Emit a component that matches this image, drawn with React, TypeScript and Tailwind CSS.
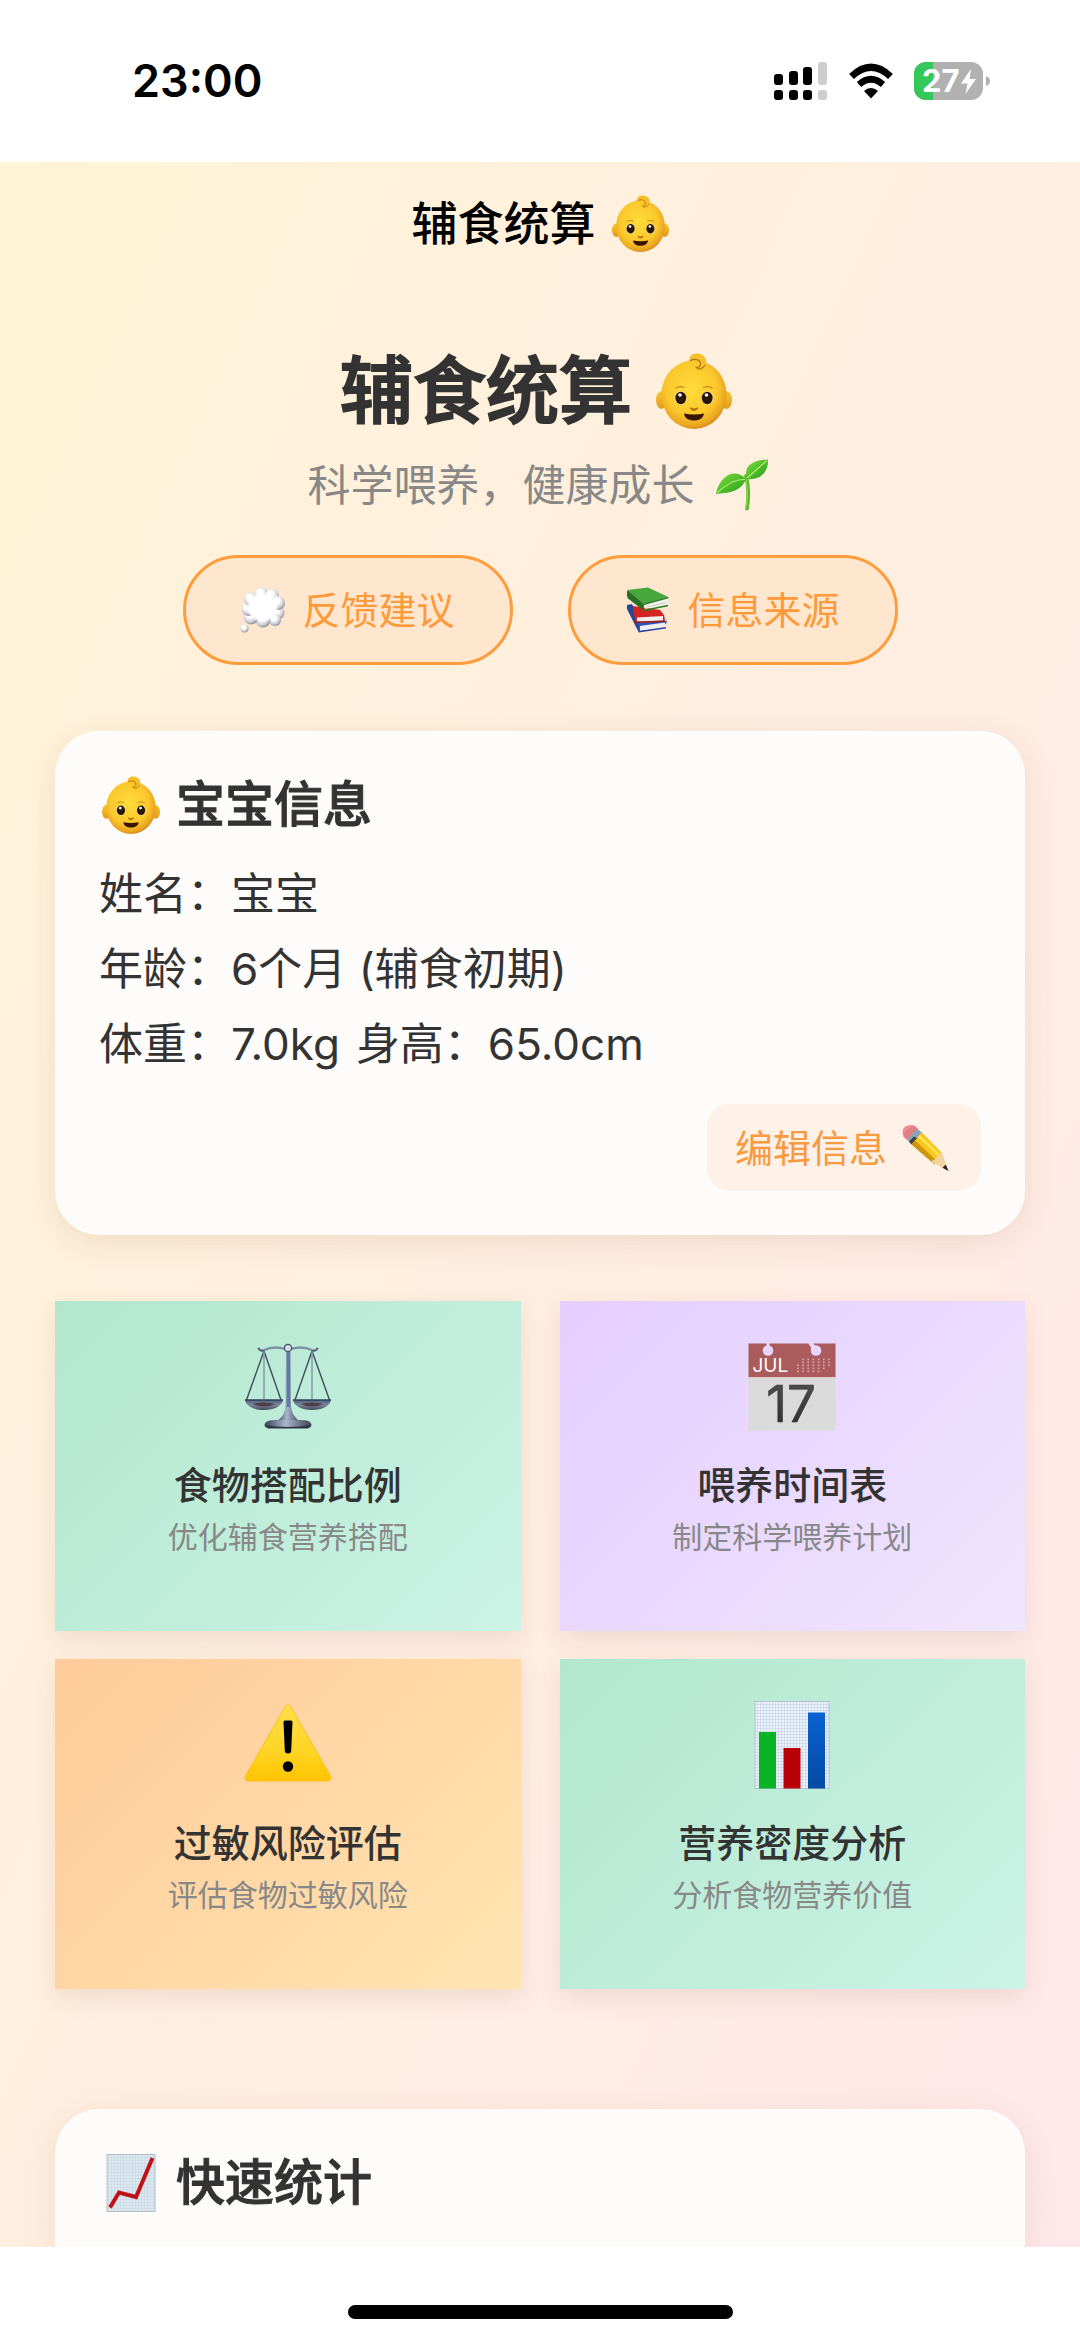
import type { ReactNode } from "react";

function BabyIcon({ className }: { className: string }) {
  return (
    <svg viewBox="0 0 76 76" className={className} aria-hidden="true">
      <defs>
        <radialGradient id="babySkin" cx="0.46" cy="0.42" r="0.6">
          <stop offset="0" stopColor="#ffdc3a" />
          <stop offset="0.65" stopColor="#fbc82c" />
          <stop offset="0.9" stopColor="#e9a41f" />
          <stop offset="1" stopColor="#cf7f1c" />
        </radialGradient>
        <linearGradient id="babyEar" x1="0" y1="0" x2="0" y2="1">
          <stop offset="0" stopColor="#f8c62d" />
          <stop offset="1" stopColor="#e29a1c" />
        </linearGradient>
      </defs>
      <ellipse cx="5.5" cy="47" rx="5.5" ry="9" fill="url(#babyEar)" />
      <ellipse cx="70.5" cy="47" rx="5.5" ry="9" fill="url(#babyEar)" />
      <ellipse cx="38" cy="41.5" rx="32.5" ry="34.5" fill="url(#babySkin)" />
      <path d="M34 8C32 3 37 0 42 .6C49 1.500 53 8 48.500 13C46.500 15.500 43 16.500 41 14.500C43.500 14 45 11.500 43.500 9.500C41.500 7 37 8 34 8Z" fill="#f7c02b" />
      <path d="M34.500 7.500C38 5.500 44 6 44.500 10.500C44.800 13.500 41.500 15 40.500 14.500C42 17 46.500 16.500 49 12.500" fill="none" stroke="#b87412" strokeWidth="1.200" strokeLinecap="round" />
      <path d="M20 35Q24 32.500 28 34.500M47.500 34.500Q52 32.500 56 35" fill="none" stroke="#c88a1a" strokeWidth="1.300" strokeLinecap="round" />
      <ellipse cx="24.500" cy="45" rx="6.200" ry="7" fill="#f3dc92" />
      <ellipse cx="51.500" cy="45" rx="6.200" ry="7" fill="#f3dc92" />
      <ellipse cx="24.800" cy="45" rx="5.400" ry="6.200" fill="#2b1506" />
      <ellipse cx="51.200" cy="45" rx="5.400" ry="6.200" fill="#2b1506" />
      <circle cx="24" cy="42" r="1.800" fill="#fff" />
      <circle cx="50.500" cy="42" r="1.800" fill="#fff" />
      <path d="M34.500 55Q38 59.500 41.500 55Q38 57 34.500 55Z" fill="#a85f0c" stroke="#b8700f" strokeWidth="1.400" strokeLinejoin="round" />
      <path d="M28 60.500Q38 62.500 48 60.500C47.500 65 43.500 67.500 38 67.500C32.500 67.500 28.500 65 28 60.500Z" fill="#3a1407" />
    </svg>
  );
}

function SproutIcon({ className }: { className: string }) {
  return (
    <svg viewBox="0 0 54 52" className={className} aria-hidden="true">
      <defs>
        <linearGradient id="leaf" x1="0" y1="0" x2="1" y2="1">
          <stop offset="0" stopColor="#7be03a" />
          <stop offset="1" stopColor="#269a1b" />
        </linearGradient>
      </defs>
      <path d="M31 17C34 28 33.500 40 32 49.500" fill="none" stroke="#5fb82c" strokeWidth="3.800" strokeLinecap="round" />
      <path d="M31 20C33 30 32.500 41 31 49" fill="none" stroke="#9be05a" strokeWidth="1" strokeLinecap="round" />
      <path d="M31.500 20C28 5 40 1 53 .5C53.500 12 46 22 31.500 20Z" fill="url(#leaf)" />
      <path d="M31 20C22 10 6 13 .8 35C13 34 26 33 31 20Z" fill="url(#leaf)" />
      <path d="M32 19C37 15 43 9 52 1.500M30 20.500C20 20 11 25 2 34" fill="none" stroke="#b2ee7a" strokeWidth="1.100" />
    </svg>
  );
}

function ThoughtIcon({ className }: { className: string }) {
  return (
    <svg viewBox="0 0 46 46" className={className} aria-hidden="true">
      <defs>
        <radialGradient id="puff" cx="0.4" cy="0.34" r="0.68">
          <stop offset="0.3" stopColor="#ffffff" />
          <stop offset="0.7" stopColor="#cfcfd6" />
          <stop offset="1" stopColor="#8c8c98" />
        </radialGradient>
        <radialGradient id="puffCore" cx="0.5" cy="0.5" r="0.5">
          <stop offset="0.8" stopColor="#ffffff" />
          <stop offset="1" stopColor="#ffffff" stopOpacity="0" />
        </radialGradient>
      </defs>
      <g fill="url(#puff)">
        <circle cx="38" cy="26" r="6.500" />
        <circle cx="35" cy="33" r="6" />
        <circle cx="23" cy="33" r="7.500" />
        <circle cx="11" cy="30" r="7.500" />
        <circle cx="8.500" cy="22" r="7" />
        <circle cx="11" cy="12.500" r="7" />
        <circle cx="21.500" cy="7.500" r="7" />
        <circle cx="32" cy="9" r="7" />
        <circle cx="38" cy="16" r="7" />
        <circle cx="4.500" cy="41.500" r="4" />
      </g>
      <ellipse cx="22.500" cy="20.500" rx="16.500" ry="15" fill="url(#puffCore)" />
    </svg>
  );
}

function BooksIcon({ className }: { className: string }) {
  return (
    <svg viewBox="0 0 46 46" className={className} aria-hidden="true">
      <path d="M2 18L7 17L16 36L13.500 45L2 22Z" fill="#27459b" />
      <path d="M13 36L38 33L42 34L41 37L14 45Z" fill="#3455b0" />
      <path d="M15 39L40 35.500V40.500L15 44Z" fill="#eef0f5" />
      <path d="M13.500 44.800L41 40.800" stroke="#27459b" strokeWidth="1.500" />
      <path d="M8 19L35 23L39 28L40 33L11 35L8 24Z" fill="#d42422" />
      <path d="M12 30.500L38 29V33.500L12 34.800Z" fill="#f3eeee" />
      <path d="M9 35.300L40 34.200" stroke="#a81517" strokeWidth="1.600" />
      <path d="M2.500 3L23 .5L43.500 10L19 17Z" fill="#47a63c" />
      <path d="M2.500 3Q1 8 3 11.500L18.500 23.500L19 17Z" fill="#256f25" />
      <path d="M19.500 17.500L43 11.500L42 17.500L20 22Z" fill="#f2f4ee" />
      <path d="M18.500 23.500L43 18.500M19 17.200L43.500 10.600" stroke="#2b7d29" strokeWidth="1.500" />
      <path d="M22 20L41 15.500" stroke="#b9bcb3" strokeWidth=".7" />
    </svg>
  );
}

function PencilIcon({ className }: { className: string }) {
  return (
    <svg viewBox="0 0 48 48" className={className} aria-hidden="true">
      <path d="M1.500 8C1 3 8-.5 13 1.500L17 5L6 16L2.500 13Z" fill="#ef8f93" />
      <path d="M2 10C5 7 9 3 13.500 1.500L17 5L6 16Z" fill="#d9656e" opacity=".45" />
      <path d="M16 4.500L21 8.500L10.500 20.500L6 15.500Z" fill="#8fa3b5" />
      <path d="M8 17.500L13 12.500L16.500 14.500L10.500 20.500Z" fill="#3d4248" />
      <path d="M21 8.500L41 29L33.500 40L10.500 20.500Z" fill="#f8c81c" />
      <path d="M10.500 20.500L14 16.500L35.500 36.500L33.500 40.500Z" fill="#cf9410" />
      <path d="M18 12L39 32" stroke="#ffe35a" strokeWidth="2.500" />
      <path d="M41 28.500L47 46.500L30.500 38Q31.500 35 34.500 35.500Q34.500 32 37.500 32.500Q38 29 41 28.500Z" fill="#f4d49c" />
      <path d="M44.800 40.500L47.500 47L41.500 43.800Z" fill="#23242a" />
    </svg>
  );
}

function ScalesIcon() {
  return (
    <svg viewBox="0 0 88 88" className="size-22" aria-hidden="true">
      <defs>
        <linearGradient id="steelH" x1="0" x2="1">
          <stop offset="0" stopColor="#384156" />
          <stop offset="0.450" stopColor="#a9b6cc" />
          <stop offset="1" stopColor="#3a4152" />
        </linearGradient>
        <linearGradient id="pan" x1="0" y1="0" x2="0" y2="1">
          <stop offset="0" stopColor="#4b5f7d" />
          <stop offset="0.500" stopColor="#7f8799" />
          <stop offset="1" stopColor="#3f495c" />
        </linearGradient>
      </defs>
      <path d="M14 5Q17 9 20 7Q31 2 44 7Q57 2 68 7Q71 9 74 5" fill="none" stroke="#7d8fa6" strokeWidth="2.400" />
      <path d="M14 5Q17 9 20 7.500M74 5Q71 9 68 7.500" fill="none" stroke="#4c5669" strokeWidth="1.200" />
      <g fill="none" stroke="#434b5a" strokeWidth="1.400">
        <path d="M20 8L2.500 57M20 8L37 57M68 8L51 57M68 8L85.500 57" />
        <path d="M20 8V57M68 8V57" stroke="#7f95aa" />
      </g>
      <path d="M1 57H39C38 63 30 67 20 67S2 63 1 57Z" fill="url(#pan)" />
      <path d="M49 57H87C86 63 78 67 68 67S50 63 49 57Z" fill="url(#pan)" />
      <path d="M9 61Q20 58 31 61Q20 66 9 61M57 61Q68 58 79 61Q68 66 57 61" fill="#4b3e49" />
      <path d="M1 57H39M49 57H87" stroke="#33415b" strokeWidth="1.500" />
      <path d="M42 9H46.500L47 63Q48 74 56 78H32Q41 74 41.500 63Z" fill="url(#steelH)" />
      <path d="M44.300 9V64" stroke="#5f7ba5" strokeWidth="3.400" />
      <circle cx="44" cy="5" r="3.600" fill="#d5deeb" stroke="#444f64" strokeWidth="1.200" />
      <path d="M20.500 82Q21 77 31 77H57Q67 77 67.500 82Q67.500 85 63 85H25Q20.500 85 20.500 82Z" fill="url(#steelH)" />
      <path d="M21 82Q44 86 67 82L64 85.500H24Z" fill="#2e3443" />
    </svg>
  );
}

const calendarDots = [
  [0, 1, 1, 1, 1, 1, 1],
  [0, 1, 1, 1, 1, 1, 1],
  [1, 1, 1, 1, 1, 1, 1],
  [1, 1, 1, 1, 1, 1, 0],
  [1, 1, 1, 1, 1, 0, 0],
];

function CalendarIcon() {
  return (
    <svg viewBox="0 0 88 88" className="size-22 overflow-visible" aria-hidden="true">
      <defs>
        <mask id="punch">
          <rect width="88" height="88" fill="#fff" />
          <circle cx="20" cy="7.500" r="5.300" />
          <rect x="18.500" y="0" width="3" height="4" />
          <circle cx="68" cy="7.500" r="5.300" />
          <path d="M60 0L64 6L68 4L65 0Z" />
        </mask>
        <linearGradient id="digit" x1="0" y1="0" x2="0" y2="1">
          <stop offset="0" stopColor="#555" />
          <stop offset="1" stopColor="#2a2a2a" />
        </linearGradient>
      </defs>
      <g mask="url(#punch)">
        <rect x=".5" y=".5" width="87" height="87" fill="#dadada" />
        <rect x=".5" y=".5" width="87" height="34" fill="#ab5b5b" />
        <path d="M.5 34.500H87.500" stroke="#e8c9c9" strokeWidth="1" />
      </g>
      <text x="4.500" y="28.500" fontSize="19" fontFamily="Inter, sans-serif" fill="#fff">JUL</text>
      {calendarDots.map((row, r) =>
        row.map((on, c) =>
          on ? <rect key={`${r}-${c}`} x={49 + c * 5.2} y={15.500 + r * 3} width="1.600" height="1.600" fill="#d8aaaa" /> : null,
        ),
      )}
      <text x="43" y="79" fontSize="51" textAnchor="middle" fontFamily="Inter, sans-serif" fill="url(#digit)" stroke="#3a3a3a" strokeWidth=".6">17</text>
    </svg>
  );
}

function WarningIcon() {
  return (
    <svg viewBox="0 0 88 88" className="size-22" aria-hidden="true">
      <defs>
        <linearGradient id="warn" x1="0" y1="0" x2="0" y2="1">
          <stop offset="0" stopColor="#ffdf4a" />
          <stop offset="0.600" stopColor="#ffd525" />
          <stop offset="1" stopColor="#fec400" />
        </linearGradient>
      </defs>
      <path d="M41 6Q44 1.500 47 6L86.500 75Q88 80 83.500 80H4.500Q0 80 1.500 75Z" fill="url(#warn)" stroke="#f8bf1c" strokeWidth="1" />
      <path d="M39.500 21Q39.500 19.500 41 19.500H47Q48.500 19.500 48.500 21L47.200 50Q47 52.500 44 52.500T40.800 50Z" fill="#000" />
      <circle cx="44" cy="65.500" r="5.200" fill="#000" />
    </svg>
  );
}

function BarChartIcon() {
  return (
    <svg viewBox="0 0 88 88" className="size-22" aria-hidden="true">
      <defs>
        <pattern id="gridFine" width="3" height="3" patternUnits="userSpaceOnUse">
          <rect width="3" height="3" fill="#eaf2fb" />
          <path d="M0 0H3M0 0V3" stroke="#b6c4d9" strokeWidth=".8" />
        </pattern>
        <linearGradient id="barBlue" x1="0" y1="0" x2="0" y2="1">
          <stop offset="0" stopColor="#0a62d0" />
          <stop offset="1" stopColor="#034aa4" />
        </linearGradient>
      </defs>
      <rect x="7" y=".5" width="74" height="87" fill="url(#gridFine)" stroke="#b5bfd0" strokeWidth="1" />
      <rect x="11" y="31" width="17" height="56.500" fill="#07b524" />
      <rect x="35.500" y="47" width="17" height="40.500" fill="#b80207" />
      <rect x="60" y="11.500" width="17" height="76" fill="url(#barBlue)" />
    </svg>
  );
}

function TrendIcon({ className }: { className: string }) {
  return (
    <svg viewBox="0 0 58 58" className={className} aria-hidden="true">
      <defs>
        <pattern id="gridSoft" width="3" height="3" patternUnits="userSpaceOnUse">
          <rect width="3" height="3" fill="#dce8f0" />
          <path d="M0 0H3M0 0V3" stroke="#bccddb" strokeWidth=".7" />
        </pattern>
      </defs>
      <rect x="5" y=".5" width="48" height="57" fill="url(#gridSoft)" stroke="#b3bcc6" strokeWidth="1" />
      <path d="M8 53.500L17 38.500L34 43L50.500 4" fill="none" stroke="#bf1218" strokeWidth="4" />
    </svg>
  );
}

function StatusBar() {
  return (
    <header className="flex h-[162px] items-center justify-between bg-white pr-[90px] pl-[132px]">
      <time className="text-[45px] leading-[60px] font-semibold text-black">23:00</time>
      <div className="flex items-center gap-5">
        <svg viewBox="0 0 54 38" className="h-[38px] w-[54px]" role="img" aria-label="信号">
          <g fill="#000">
            <rect x="0" y="12" width="9" height="11" rx="3" />
            <rect x="15" y="9" width="9" height="14" rx="3" />
            <rect x="29" y="5" width="9" height="18" rx="3" />
            <rect x="0" y="28" width="9" height="10" rx="3" />
            <rect x="15" y="28" width="9" height="10" rx="3" />
            <rect x="29" y="28" width="9" height="10" rx="3" />
          </g>
          <g fill="#cdcdcd">
            <rect x="44" y="0" width="9" height="23" rx="3" />
            <rect x="44" y="28" width="9" height="10" rx="3" />
          </g>
        </svg>
        <svg viewBox="0 0 46 36" className="h-9 w-[46px]" role="img" aria-label="无线网络">
          <path d="M3.500 13.500Q23-5 42.500 13.500" fill="none" stroke="#000" strokeWidth="7" />
          <path d="M11 21.500Q23 11 35 21.500" fill="none" stroke="#000" strokeWidth="6.500" />
          <path d="M16 28Q23 22 30 28L23 35.500Z" fill="#000" />
        </svg>
        <svg viewBox="0 0 76 38" className="h-[38px] w-[76px]" role="img" aria-label="电量 27%">
          <defs>
            <clipPath id="cell">
              <rect width="69" height="38" rx="12" />
            </clipPath>
          </defs>
          <g clipPath="url(#cell)">
            <rect width="69" height="38" fill="#b1b1b1" />
            <rect width="19" height="38" fill="#34c759" />
          </g>
          <path d="M72 14Q76 15.500 76 19T72 24Z" fill="#b1b1b1" />
          <text x="8" y="30" fontSize="31" fontWeight="700" fontFamily="Inter, sans-serif" fill="#fff">27</text>
          <path d="M57 7L47 21.500H53.500L51.500 32L62 17H55.500Z" fill="#fff" />
        </svg>
      </div>
    </header>
  );
}

function PillButton({ icon, children }: { icon: ReactNode; children: ReactNode }) {
  return (
    <button className="flex h-[110px] w-[330px] items-center justify-center gap-4 rounded-full border-3 border-[#ff9d3d] bg-[#ffe7cf] text-[38px] leading-[56px] text-[#ff9a3a]">
      {icon}
      <span>{children}</span>
    </button>
  );
}

const tiles = [
  { title: "食物搭配比例", text: "优化辅食营养搭配", icon: <ScalesIcon />, tone: "from-[#b2e7cd] to-[#cbf3e6]" },
  { title: "喂养时间表", text: "制定科学喂养计划", icon: <CalendarIcon />, tone: "from-[#e4ceff] to-[#f0e5fe]" },
  { title: "过敏风险评估", text: "评估食物过敏风险", icon: <WarningIcon />, tone: "from-[#ffca99] to-[#ffe5b2]" },
  { title: "营养密度分析", text: "分析食物营养价值", icon: <BarChartIcon />, tone: "from-[#b2e7cd] to-[#cbf3e6]" },
];

export default function App() {
  return (
    <div className="flex min-h-screen flex-col bg-white font-['Inter','Noto_Sans_CJK_SC',sans-serif] text-[#333333]">
      <StatusBar />
      <main className="flex flex-1 flex-col overflow-hidden bg-[linear-gradient(115deg,#fff4d7_0%,#ffeee1_55%,#ffe8ea_100%)] px-[55px]">
        <div className="flex h-[122px] items-center justify-center gap-4 text-[46px] leading-[60px] font-medium text-black">
          <span>辅食统算</span>
          <BabyIcon className="size-[57px]" />
        </div>

        <div className="mt-[63px] flex flex-col items-center">
          <h1 className="flex items-center gap-6 pr-2 text-[73px] leading-[88px] font-medium">
            <span className="[-webkit-text-stroke:2px_#333333]">辅食统算</span>
            <BabyIcon className="size-[76px]" />
          </h1>
          <p className="mt-5 flex items-center gap-5 pr-1 text-[43px] leading-[60px] text-[#888888]">
            <span>科学喂养，健康成长</span>
            <SproutIcon className="h-[52px] w-[54px]" />
          </p>
          <div className="mt-10 flex gap-[55px]">
            <PillButton icon={<ThoughtIcon className="size-[46px]" />}>反馈建议</PillButton>
            <PillButton icon={<BooksIcon className="size-[46px]" />}>信息来源</PillButton>
          </div>
        </div>

        <section className="mt-[66px] rounded-[44px] bg-[#fdfcfa] px-11 pt-[38px] pb-11 shadow-[0_8px_32px_rgba(120,80,40,0.12)]">
          <h2 className="flex items-center gap-4 px-[3px] text-[49px] leading-[72px] font-medium">
            <BabyIcon className="size-[58px]" />
            <span className="[-webkit-text-stroke:1px_#333333]">宝宝信息</span>
          </h2>
          <div className="mt-4 text-[44px] leading-[75px]">
            <p>姓名：宝宝</p>
            <p>年龄：6个月 (辅食初期)</p>
            <p className="flex gap-4">
              <span>体重：7.0kg</span>
              <span>身高：65.0cm</span>
            </p>
          </div>
          <div className="mt-[22px] flex justify-end">
            <button className="flex h-[87px] items-center gap-3.5 rounded-[22px] bg-[#fdf1e8] pr-8 pl-7 text-[38px] leading-[56px] text-[#f99a40]">
              <span>编辑信息</span>
              <PencilIcon className="size-12" />
            </button>
          </div>
        </section>

        <div className="mt-[66px] grid grid-cols-2 gap-x-[39px] gap-y-7">
          {tiles.map((tile) => (
            <button
              key={tile.title}
              className={`flex flex-col items-center bg-linear-135 pt-[42px] pb-[72px] shadow-[0_8px_22px_rgba(120,80,60,0.12)] ${tile.tone}`}
            >
              {tile.icon}
              <span className="mt-[26px] text-[38px] leading-[56px] font-medium">{tile.title}</span>
              <span className="mt-[2px] text-[30px] leading-[44px] text-[#888888]">{tile.text}</span>
            </button>
          ))}
        </div>

        <section className="mt-[120px] flex-1 rounded-t-[44px] bg-[#fdfcfb] px-11 pt-[38px] pb-7 shadow-[0_8px_32px_rgba(120,80,40,0.12)]">
          <h2 className="flex items-center gap-4 px-[3px] text-[49px] leading-[72px] font-medium">
            <TrendIcon className="size-[58px]" />
            <span className="[-webkit-text-stroke:1px_#333333]">快速统计</span>
          </h2>
        </section>
      </main>
      <footer className="flex justify-center bg-white pt-[58px] pb-[22px]">
        <div className="h-3.5 w-[385px] rounded-full bg-black" />
      </footer>
    </div>
  );
}
